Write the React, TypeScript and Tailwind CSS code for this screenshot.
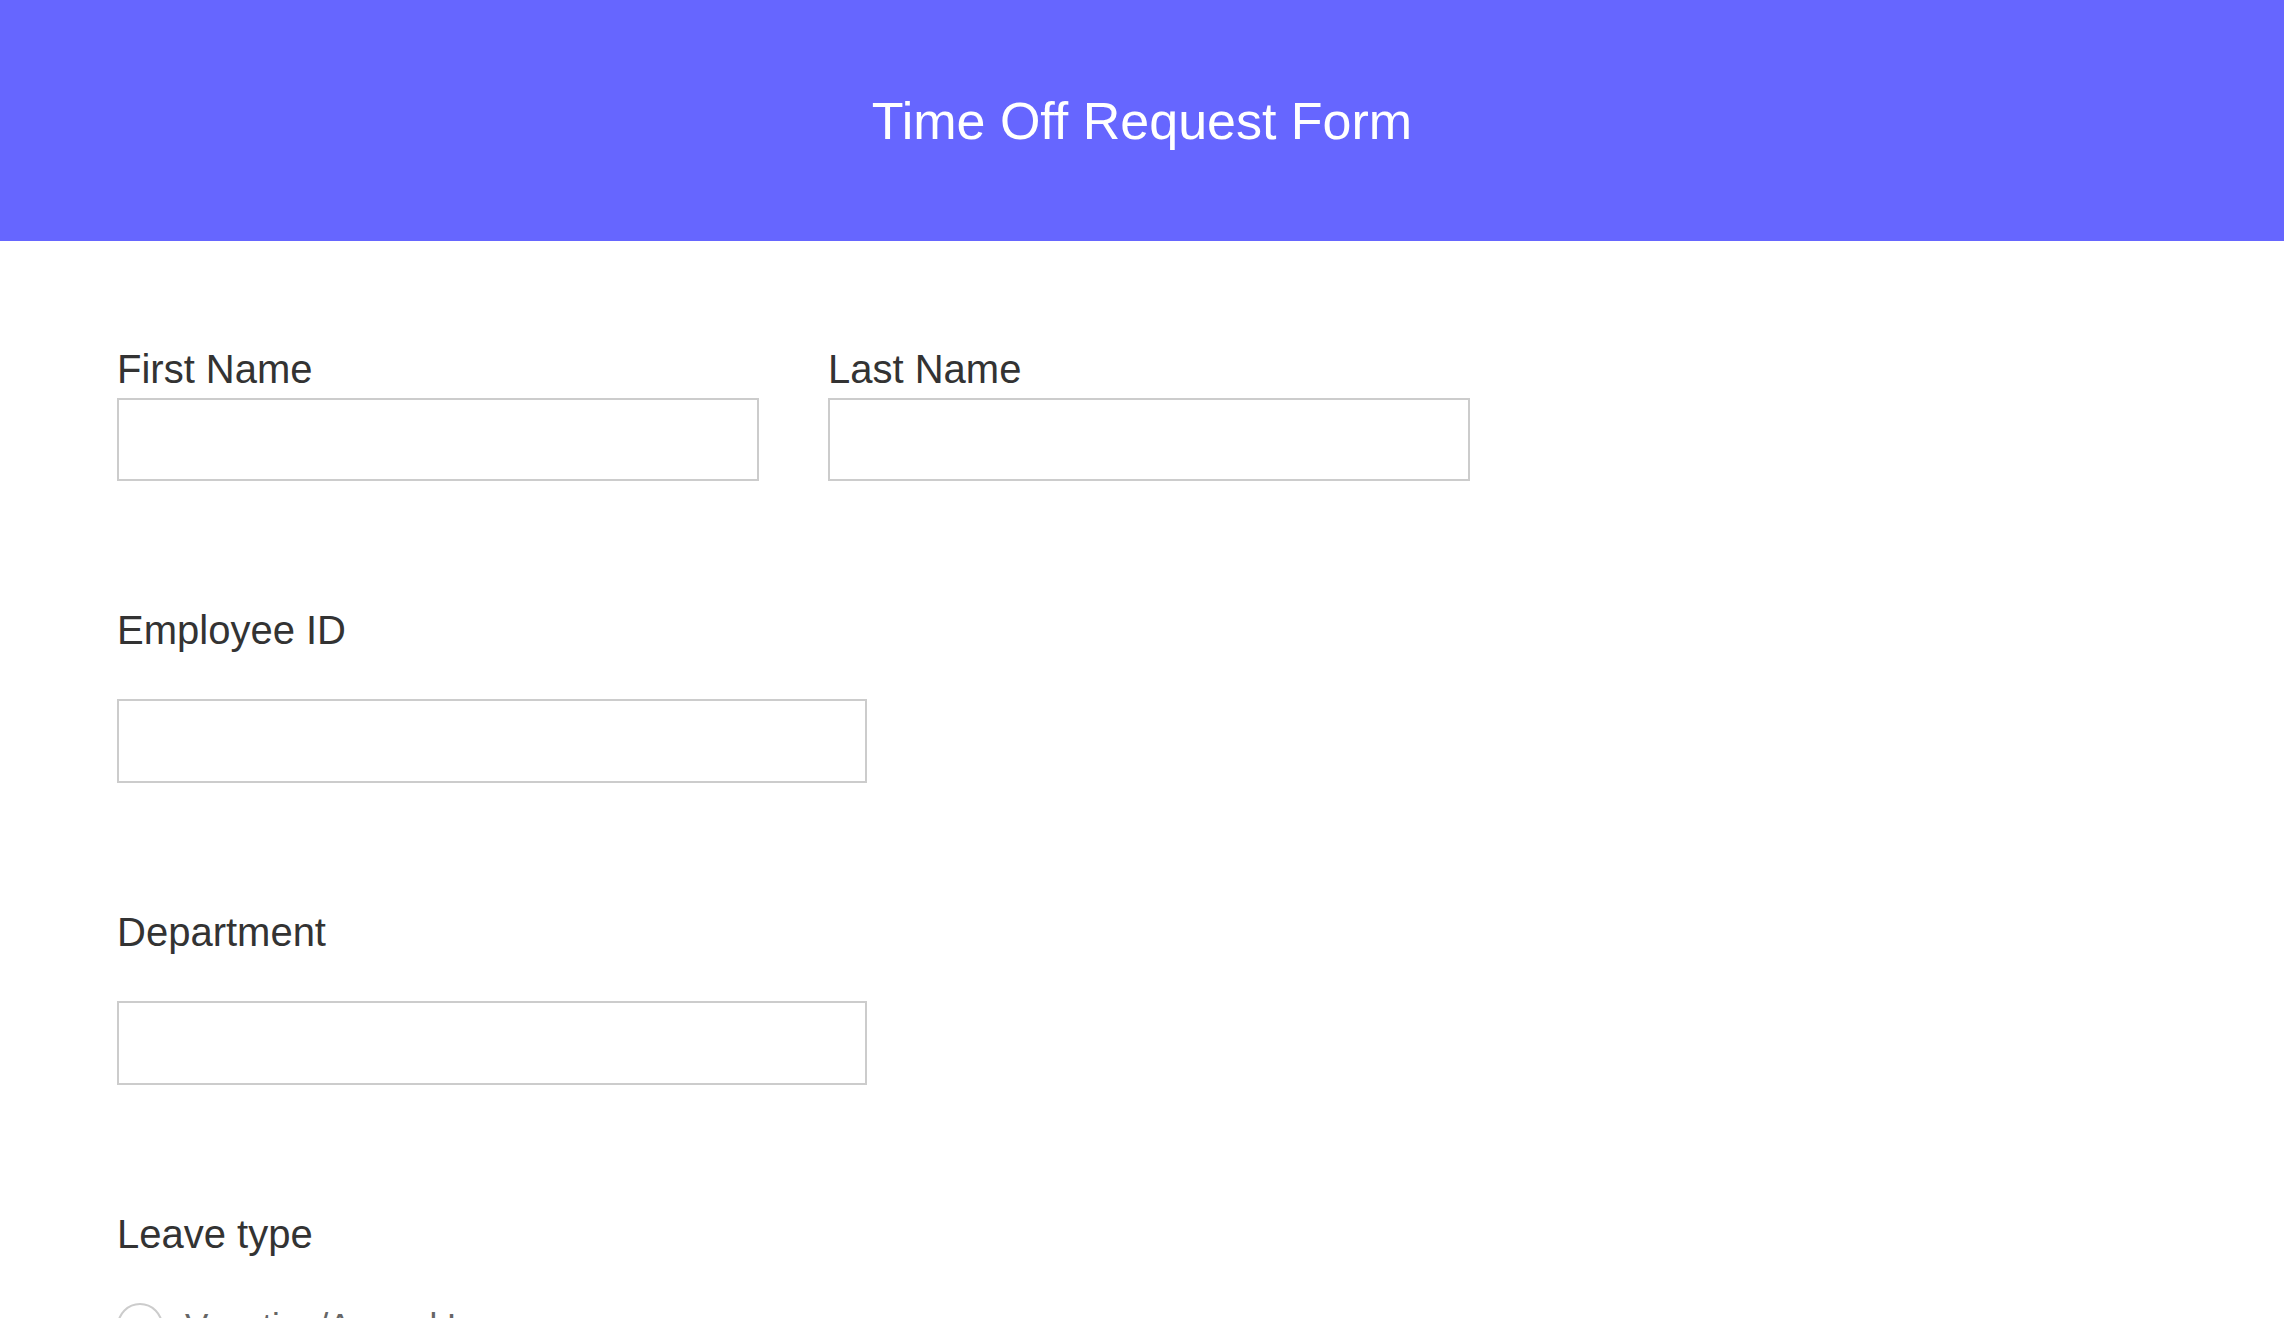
import React from "react";

function Field({ label }: { label: string }) {
  return (
    <div className="mt-[126px]">
      <label className="block text-[40px] leading-[46px] text-[#333333]">{label}</label>
      <input
        type="text"
        className="mt-[46px] block h-[84px] w-[750px] border-2 border-[#cccccc] bg-white outline-none"
      />
    </div>
  );
}

export default function App() {
  return (
    <div className="min-h-screen bg-white font-['Liberation_Sans',Arial,Helvetica,sans-serif]">
      <header className="flex h-[241px] items-center justify-center bg-[#6666ff]">
        <h1 className="text-[52px] font-normal leading-[60px] text-white">Time Off Request Form</h1>
      </header>
      <main className="pl-[117px] pt-[105px] pb-[60px]">
        <div className="flex gap-[69px]">
          <div>
            <label className="block text-[40px] leading-[46px] text-[#333333]">First Name</label>
            <input type="text" className="mt-[6px] block h-[83px] w-[642px] border-2 border-[#cccccc] bg-white outline-none" />
          </div>
          <div>
            <label className="block text-[40px] leading-[46px] text-[#333333]">Last Name</label>
            <input type="text" className="mt-[6px] block h-[83px] w-[642px] border-2 border-[#cccccc] bg-white outline-none" />
          </div>
        </div>
        <Field label="Employee ID" />
        <Field label="Department" />
        <div className="mt-[126px]">
          <div className="text-[40px] leading-[46px] text-[#333333]">Leave type</div>
          <div className="mt-[46px] flex flex-col gap-[30px]">
            <label className="flex items-center gap-[22px]">
              <span className="block h-[46px] w-[46px] rounded-full border-2 border-[#cccccc] bg-white" />
              <span className="text-[35px] leading-[46px] text-[#666666]">Vacation/Annual Leave</span>
            </label>
          </div>
        </div>
      </main>
    </div>
  );
}
